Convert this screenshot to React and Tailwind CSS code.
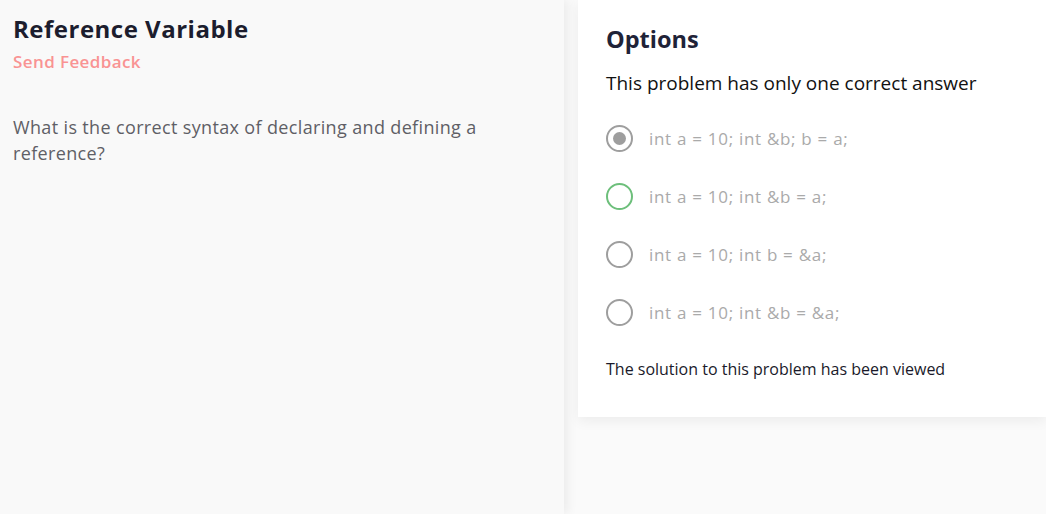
const options = [
  { text: "int a = 10; int &b; b = a;", state: "selected" },
  { text: "int a = 10; int &b = a;", state: "correct" },
  { text: "int a = 10; int b = &a;", state: "none" },
  { text: "int a = 10; int &b = &a;", state: "none" },
];

function Radio({ state }) {
  if (state === "selected") {
    return (
      <span className="w-[27px] h-[27px] rounded-full border-2 border-[#9e9e9e] flex items-center justify-center shrink-0">
        <span className="w-[13px] h-[13px] rounded-full bg-[#9e9e9e]" />
      </span>
    );
  }
  return (
    <span
      className={`w-[27px] h-[27px] rounded-full border-2 shrink-0 ${
        state === "correct" ? "border-[#6dbf7b]" : "border-[#9e9e9e]"
      }`}
    />
  );
}

export default function App() {
  return (
    <div
      className="flex w-[1046px] h-[514px] overflow-hidden bg-[#fafafa]"
      style={{ fontFamily: "'Open Sans', 'Noto Sans', sans-serif" }}
    >
      {/* Problem statement */}
      <div className="w-[564px] shrink-0 h-full bg-[#f9f9f9] shadow-[4px_0_10px_rgba(0,0,0,0.06)] relative z-10 px-[13px] pt-[13px]">
        <h1 className="text-[24px] leading-[32px] font-bold tracking-[0.5px] text-[#1c1d2e]">Reference Variable</h1>
        <div className="text-[17px] leading-[22px] font-semibold tracking-[0.4px] text-[#f99393] mt-[6px]">Send Feedback</div>
        <p className="text-[18px] leading-[26px] tracking-[0.35px] text-[#5f5f66] mt-[41px] w-[490px]">
          What is the correct syntax of declaring and defining a reference?
        </p>
      </div>

      {/* Options card */}
      <div className="flex-1 pl-[14px]">
        <div className="bg-white h-[417px] shadow-[0_4px_12px_rgba(0,0,0,0.06)] pl-[28px] pt-[24px]">
          <h2 className="text-[23.5px] leading-[30px] font-bold text-[#1f2338]">Options</h2>
          <div className="text-[19px] leading-[26px] font-medium text-[#111] mt-[16px]">
            This problem has only one correct answer
          </div>
          <div className="flex flex-col gap-[31px] mt-[29px]">
            {options.map((o) => (
              <div key={o.text} className="flex items-center gap-[16px] h-[27px]">
                <Radio state={o.state} />
                <span className="text-[17px] tracking-[0.7px] text-[#aaaaaa]">{o.text}</span>
              </div>
            ))}
          </div>
          <div className="text-[16px] leading-[22px] text-[#1a1a2a] mt-[32px]">
            The solution to this problem has been viewed
          </div>
        </div>
      </div>
    </div>
  );
}
